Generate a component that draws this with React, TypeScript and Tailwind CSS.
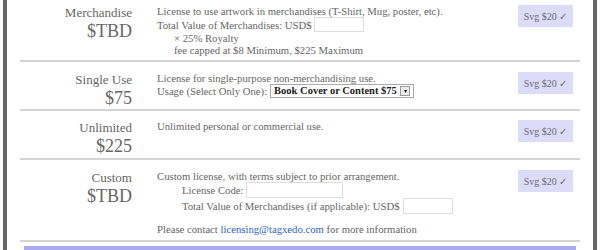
const serif = "font-['Liberation_Serif',Georgia,serif]";

function Badge() {
  return (
    <div className="flex h-[22px] w-[55px] items-center justify-center bg-[#dcdcf8] text-[10px] text-[#6a6a7a]">
      Svg $20 ✓
    </div>
  );
}

function Row({
  label,
  price,
  children,
  className,
}: {
  label: string;
  price: string;
  children: React.ReactNode;
  className: string;
}) {
  return (
    <div className={`grid grid-cols-[112px_1fr_55px] gap-x-[25px] border-b-2 border-[#d4d4d4] pr-[7px] ${className}`}>
      <div className="text-right text-[#666]">
        <div className="text-[13px] leading-[16px]">{label}</div>
        <div className="text-[18px] leading-[20px]">{price}</div>
      </div>
      <div className="text-[10.7px] leading-[12px] text-[#666]">{children}</div>
      <Badge />
    </div>
  );
}

export default function App() {
  return (
    <div className={`h-[250px] w-[600px] overflow-hidden bg-white px-[3px] ${serif}`}>
      <div className="h-full border-x-4 border-[#666] bg-white px-[13px]">
        <Row label="Merchandise" price="$TBD" className="h-[62px] pt-[5px]">
          <div>License to use artwork in merchandises (T-Shirt, Mug, poster, etc).</div>
          <div className="flex items-center">
            Total Value of Merchandises: USD$
            <input className="ml-[2px] h-[15px] w-[50px] border border-[#ddd] bg-white outline-none" />
          </div>
          <div className="pl-[17px]">× 25% Royalty</div>
          <div className="pl-[17px]">fee capped at $8 Minimum, $225 Maximum</div>
        </Row>
        <Row label="Single Use" price="$75" className="h-[49px] pt-[10px]">
          <div>License for single-purpose non-merchandising use.</div>
          <div className="flex items-center">
            Usage (Select Only One):
            <select
              defaultValue="book"
              className="ml-[3px] h-[14px] w-[144px] appearance-none border border-[#aaa] bg-white pl-[3px] text-[10.5px] leading-[12px] font-bold text-[#222]"
            >
              <option value="book">Book Cover or Content $75</option>
            </select>
            <span className="-ml-[14px] flex h-[10px] w-[10px] items-center justify-center border border-[#999] bg-[#eee] text-[6px] leading-none text-black">
              ▾
            </span>
          </div>
        </Row>
        <Row label="Unlimited" price="$225" className="h-[49px] pt-[9px]">
          <div>Unlimited personal or commercial use.</div>
        </Row>
        <Row label="Custom" price="$TBD" className="h-[82px] pt-[10px]">
          <div>Custom license, with terms subject to prior arrangement.</div>
          <div className="flex items-center pl-[25px]">
            License Code:
            <input className="ml-[3px] h-[16px] w-[97px] border border-[#ddd] bg-white outline-none" />
          </div>
          <div className="flex items-center pl-[25px]">
            Total Value of Merchandises (if applicable): USD$
            <input className="ml-[3px] h-[16px] w-[50px] border border-[#ddd] bg-white outline-none" />
          </div>
          <div className="mt-[9px]">
            Please contact <span className="text-[#1f64c8]">licensing@tagxedo.com</span> for more information
          </div>
        </Row>
        <div className="mx-[4px] mt-[4px] h-[10px] bg-[#aaaaf2]" />
      </div>
    </div>
  );
}
